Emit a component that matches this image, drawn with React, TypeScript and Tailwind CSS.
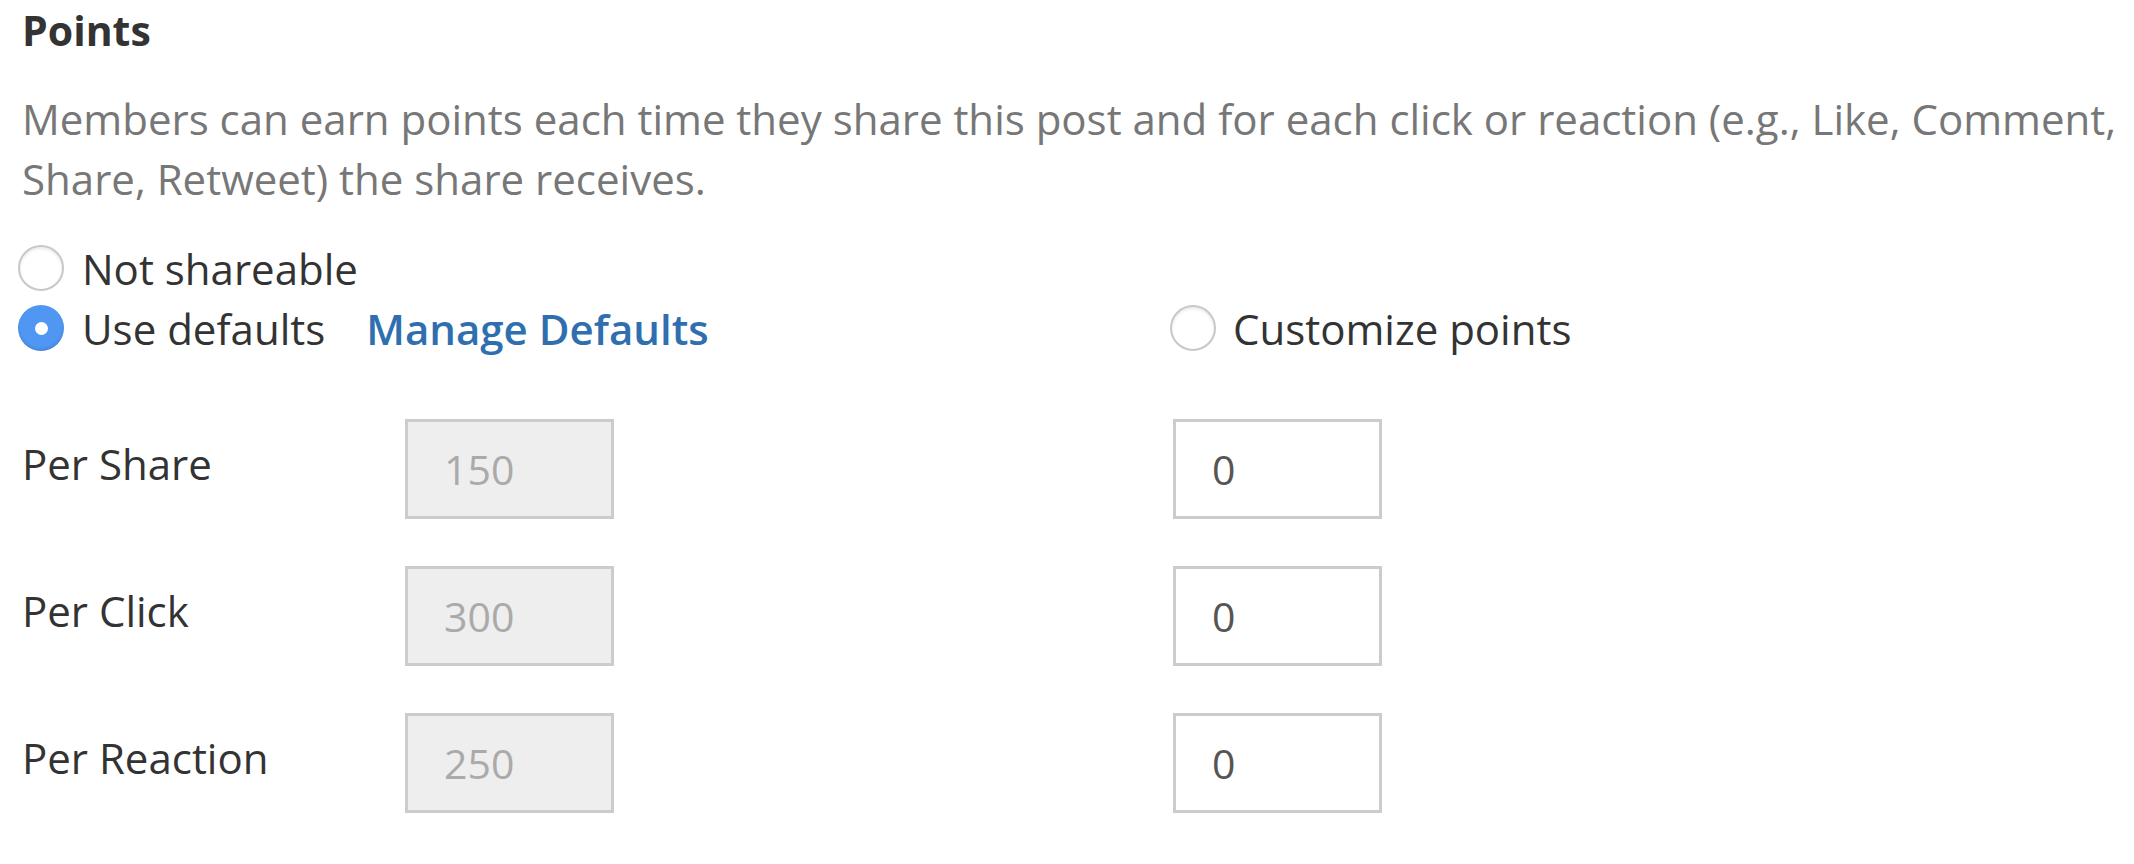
import React from "react";

function Radio({ checked }: { checked?: boolean }) {
  if (checked) {
    return (
      <span className="flex h-[46px] w-[46px] shrink-0 items-center justify-center rounded-full bg-[#4f97f2] shadow-[inset_0_-2px_3px_rgba(0,0,0,0.12)]">
        <span className="h-[13px] w-[13px] rounded-full bg-white" />
      </span>
    );
  }
  return (
    <span className="h-[46px] w-[46px] shrink-0 rounded-full border-[2px] border-[#c8c8c8] bg-white shadow-[inset_0_2px_3px_rgba(0,0,0,0.08)]" />
  );
}

function Box({ value, disabled }: { value: string; disabled?: boolean }) {
  return (
    <div
      className={
        disabled
          ? "flex h-[100px] w-[209px] items-center border-[3px] border-[#cccccc] bg-[#eeeeee] pl-[36px] text-[#aaaaaa]"
          : "flex h-[100px] w-[209px] items-center border-[3px] border-[#cccccc] bg-white pl-[36px] text-[#555555]"
      }
    >
      <span className="text-[41px] leading-none">{value}</span>
    </div>
  );
}

function Row({ label, def }: { label: string; def: string }) {
  return (
    <div className="flex h-[100px] items-center">
      <div className="mt-[-10px] w-[383px] text-[42px] leading-[60px] text-[#333333]">{label}</div>
      <div className="w-[768px]">
        <Box value={def} disabled />
      </div>
      <Box value="0" />
    </div>
  );
}

export default function App() {
  return (
    <div
      className="min-h-[864px] w-[2134px] bg-white pl-[22px] pt-[6px]"
      style={{ fontFamily: '"Open Sans", "Liberation Sans", sans-serif' }}
    >
      <h2 className="text-[41px] font-bold leading-[48px] text-[#333333]">Points</h2>
      <p className="mt-[35px] text-[42px] leading-[60px] text-[#777777]">
        Members can earn points each time they share this post and for each click or reaction (e.g., Like, Comment,
        <br />
        Share, Retweet) the share receives.
      </p>
      <div className="ml-[-4px] mt-[29px] flex h-[60px] items-center gap-[18px] text-[42px] text-[#333333]">
        <Radio />
        <span>Not shareable</span>
      </div>
      <div className="ml-[-4px] flex h-[60px] items-center text-[42px] text-[#333333]">
        <div className="flex w-[1152px] items-center">
          <Radio checked />
          <span className="ml-[18px]">Use defaults</span>
          <a className="ml-[41px] font-semibold text-[#2f6fb0]">Manage Defaults</a>
        </div>
        <div className="flex items-center gap-[17px]">
          <Radio />
          <span>Customize points</span>
        </div>
      </div>
      <div className="mt-[61px] flex flex-col gap-[47px]">
        <Row label="Per Share" def="150" />
        <Row label="Per Click" def="300" />
        <Row label="Per Reaction" def="250" />
      </div>
    </div>
  );
}
